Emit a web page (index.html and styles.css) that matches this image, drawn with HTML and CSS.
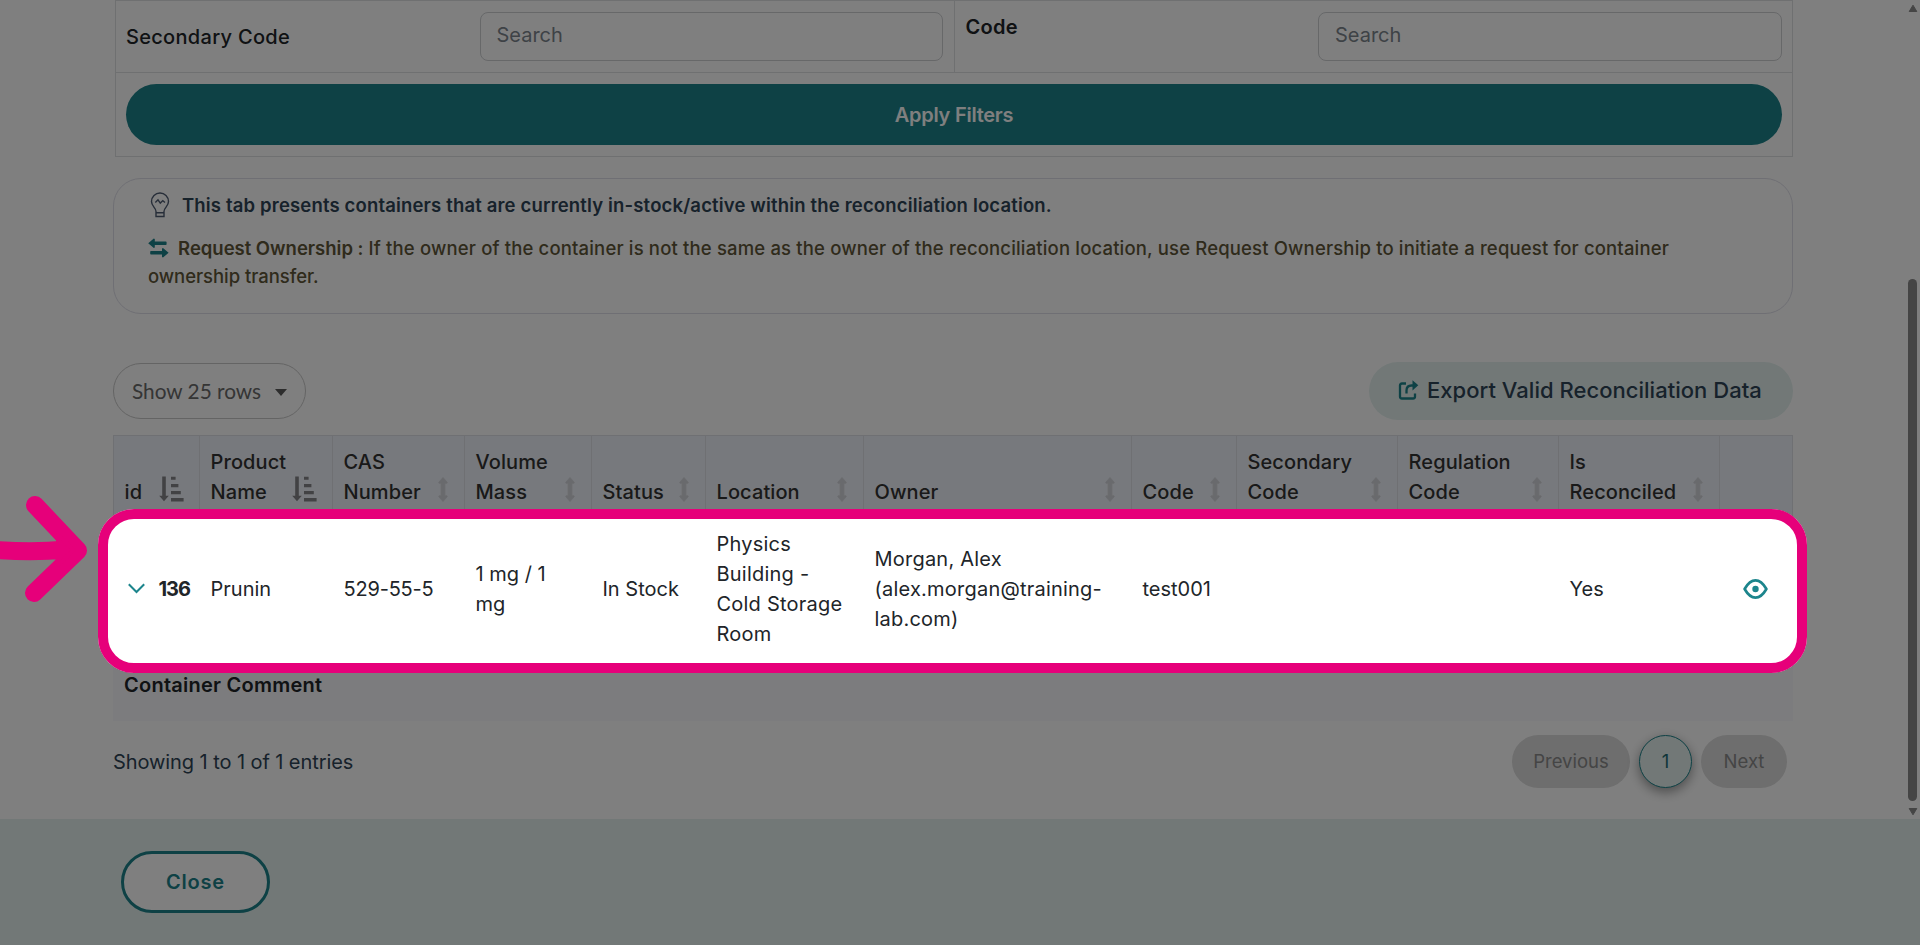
FILE: index.html
```
<!DOCTYPE html>
<html lang="en">
<head>
	<meta charset="utf-8" />
	<title>Reconciliation</title>
	<link rel="stylesheet" href="styles.css">
</head>
<body>
    <!-- Icons shared by the table head -->
    <svg class="sprite" width="0" height="0">
        <symbol id="sort" viewBox="0 0 10 25">
            <path d="M5 0.500 9.300 5.400 9 6.200H6.900V18.800H9L9.300 19.600 5 24.500 .7 19.600 1 18.800H3.100V6.200H1L.7 5.400Z" stroke="currentColor" stroke-width=".8" stroke-linejoin="round" fill="currentColor"/>
        </symbol>
        <symbol id="sort-asc" viewBox="0 0 25 26">
            <path d="M3.2 .5h3.6v19.3h3L5 25.2 .2 19.8h3zM12 .7h4.6v3H12zM12 8h7.4v3.2H12zM12 15h9.8v3.2H12zM12 22h12.6v3.4H12z" fill="currentColor"/>
        </symbol>
    </svg>

    <div class="page">
        <div class="scroller">
            <div class="content">

                <div class="filters">
                    <div class="filter-row">
                        <div class="filter">
                            <label class="filter-name">Secondary Code</label>
                            <input class="filter-input" type="text" placeholder="Search">
                        </div>
                        <div class="filter">
                            <label class="filter-name top">Code</label>
                            <input class="filter-input" type="text" placeholder="Search">
                        </div>
                    </div>
                    <div class="filter-apply">
                        <button class="btn-apply">Apply Filters</button>
                    </div>
                </div>

                <div class="info">
                    <div class="info-title">
                        <svg class="bulb" width="20" height="26" viewBox="0 0 20 26" fill="none" stroke="currentColor" stroke-width="1.4">
                            <path d="M6 19.500C6 15.500 1.500 14.500 1.500 9.500a8.500 8.500 0 0 1 17 0C18.500 14.500 14 15.500 14 19.500V24.500H6Z"/>
                            <path d="M6 20.800H14M5.300 10.500l2.700-2.700 2.300 3.300 2.500-2.500 2.200 1.900"/>
                        </svg>
                        This tab presents containers that are currently in-stock/active within the reconciliation location.
                    </div>
                    <div class="info-text">
                        <svg class="swap" width="21" height="20" viewBox="0 0 21 20" fill="currentColor">
                            <path d="M.2 5.200 5.800.400 6.800 1V3.400H17.800q.8 0 .8.8V6.200q0 .8-.8.8H6.800V9.400L5.800 10ZM20.600 14.800 15 10 14 10.600V13H3q-.8 0-.8.8V15.800q0 .8.8.8H14V19L15 19.600Z"/>
                        </svg>
                        <b class="info-key">Request Ownership :</b>
                        If the owner of the container is not the same as the owner of the reconciliation location, use Request Ownership to initiate a request for container<br>
                        <span class="info-last">ownership transfer.</span>
                    </div>
                </div>

                <div class="toolbar">
                    <button class="btn-rows">Show 25 rows <span class="caret"></span></button>
                    <button class="btn-export">
                        <svg width="21" height="22" viewBox="0 0 21 22" fill="none" stroke="currentColor" stroke-width="2.3">
                            <path d="M8 4.500H4Q2 4.500 2 6.500V17.500Q2 19.500 4 19.500H15Q17 19.500 17 17.500V14.500"/>
                            <path d="M8.500 14.500V11.500Q8.500 6.500 13.500 6.500H15"/>
                            <path d="M14.500 1.200 20.300 6.300 14.500 11.400Z" fill="currentColor" stroke="none"/>
                        </svg>
                        Export Valid Reconciliation Data
                    </button>
                </div>

                <table class="grid">
                    <colgroup>
                        <col class="c-id"><col class="c-product"><col class="c-cas"><col class="c-volume">
                        <col class="c-status"><col class="c-location"><col class="c-owner"><col class="c-code">
                        <col class="c-wide"><col class="c-wide"><col class="c-wide"><col class="c-view">
                    </colgroup>
                    <thead>
                        <tr>
                            <th><div class="head sorted">id <svg><use href="#sort-asc"/></svg></div></th>
                            <th><div class="head sorted">Product<br>Name <svg><use href="#sort-asc"/></svg></div></th>
                            <th><div class="head">CAS<br>Number <svg><use href="#sort"/></svg></div></th>
                            <th><div class="head">Volume<br>Mass <svg><use href="#sort"/></svg></div></th>
                            <th><div class="head">Status <svg><use href="#sort"/></svg></div></th>
                            <th><div class="head">Location <svg><use href="#sort"/></svg></div></th>
                            <th><div class="head">Owner <svg><use href="#sort"/></svg></div></th>
                            <th><div class="head">Code <svg><use href="#sort"/></svg></div></th>
                            <th><div class="head">Secondary<br>Code <svg><use href="#sort"/></svg></div></th>
                            <th><div class="head">Regulation<br>Code <svg><use href="#sort"/></svg></div></th>
                            <th><div class="head">Is<br>Reconciled <svg><use href="#sort"/></svg></div></th>
                            <th></th>
                        </tr>
                    </thead>
                    <tbody>
                        <tr class="item">
                            <td>
                                <div class="toggle">
                                    <svg width="17" height="11" viewBox="0 0 17 11" fill="none" stroke="#1c858c" stroke-width="2"><path d="M.8 1.300 8.500 9 16.200 1.300"/></svg>
                                    <b class="item-id">136</b>
                                </div>
                            </td>
                            <td>Prunin</td>
                            <td class="cas">529-55-5</td>
                            <td>1 mg / 1<br>mg</td>
                            <td>In Stock</td>
                            <td class="loc">Physics<br>Building -<br>Cold Storage<br>Room</td>
                            <td class="owner">Morgan, Alex<br>(alex.morgan@training-<br>lab.com)</td>
                            <td>test001</td>
                            <td></td>
                            <td></td>
                            <td>Yes</td>
                            <td class="view">
                                <svg width="25" height="20" viewBox="0 0 25 20">
                                    <path d="M1.600 10Q6.500 1.400 12.500 1.400T23.400 10Q18.500 18.600 12.500 18.600T1.600 10Z" fill="none" stroke="#1c858c" stroke-width="2.700" stroke-linejoin="round"/>
                                    <circle cx="12.500" cy="10" r="3.200" fill="#1c858c"/>
                                </svg>
                            </td>
                        </tr>
                        <tr class="comment">
                            <td colspan="12">Container Comment</td>
                        </tr>
                    </tbody>
                </table>

                <div class="table-foot">
                    <div class="count">Showing 1 to 1 of 1 entries</div>
                    <div class="pager">
                        <span class="pg prev">Previous</span>
                        <span class="pg current">1</span>
                        <span class="pg next">Next</span>
                    </div>
                </div>
            </div>

            <div class="scrollbar">
                <svg width="10" height="9" viewBox="0 0 10 9"><path d="M5 1.200 8.800 7.500H1.200Z" fill="#8a8a8a" stroke="#8a8a8a" stroke-linejoin="round"/></svg>
                <div class="thumb"></div>
                <svg width="10" height="9" viewBox="0 0 10 9"><path d="M5 7.800 8.800 1.500H1.200Z" fill="#8a8a8a" stroke="#8a8a8a" stroke-linejoin="round"/></svg>
            </div>
        </div>

        <div class="footer">
            <button class="btn-close">Close</button>
        </div>

        <!-- Dims everything but the highlighted row -->
        <div class="spotlight"></div>
        <svg class="pointer" width="90" height="110" viewBox="0 0 90 110" fill="none" stroke="#e6007a" stroke-width="18" stroke-linecap="round" stroke-linejoin="round">
            <path d="M-10 54.500Q32 58 66 54.500M35 10 78 55.500 34 98"/>
            <path d="M58 40 74 55 58 70Z" fill="#e6007a" stroke-width="4"/>
        </svg>
    </div>
</body>
</html>
```
FILE: styles.css
```
* {
    box-sizing:border-box;
}
body {
    margin:0;
    font:20px/30px Inter, "Liberation Sans", sans-serif;
    color:#212529;
    background:#fff;
}
button, input {
    font:inherit;
    color:inherit;
    margin:0;
}
.sprite {
    position:absolute;
}
.page {
    position:relative;
    width:1920px;
    height:945px;
    overflow:hidden;
}
.scroller {
    display:flex;
    height:819px;
}
.content {
    width:1680px;
    margin-left:113px;
}

/*Filters*/

.filters {
    margin-left:2px;
    border:1px solid #dee0e2;
}
.filter-row {
    display:flex;
    height:72px;
    border-bottom:1px solid #dee0e2;
}
.filter {
    display:flex;
    flex:1;
    justify-content:space-between;
    align-items:center;
    padding:0 10px;
}
.filter:first-child {
    border-right:1px solid #dee0e2;
}
.filter-name {
    font-weight:500;
    letter-spacing:.3px;
}
.filter-name.top {
    align-self:flex-start;
    margin:11px 0 0 1px;
    font-weight:600;
}
.filter-input {
    width:464px;
    height:49px;
    padding:0 16px 4px;
    border:1px solid #ced0d3;
    border-radius:8px;
    background:#fff;
}
.filter:first-child .filter-input {
    width:463px;
    margin-right:1px;
}
.filter-input::placeholder {
    color:#7c858d;
    opacity:1;
}
.filter-apply {
    padding:11px 10px;
}
.btn-apply {
    display:block;
    width:100%;
    height:61px;
    border:0;
    border-radius:31px;
    background:#1c828a;
    color:#fff;
    font-weight:600;
    letter-spacing:-.25px;
}

/*Info box*/

.info {
    height:136px;
    margin-top:21px;
    padding:12px 34px;
    border:1px solid #dedee8;
    border-radius:28px;
    font-size:18.5px;
    line-height:28px;
}
.info-title {
    display:flex;
    align-items:center;
    color:#2f4456;
    font-weight:600;
    letter-spacing:.16px;
}
.bulb {
    margin:0 12px 0 2px;
    color:#4f5c72;
}
.info-text {
    margin-top:15px;
    color:#5f5638;
    font-weight:500;
    letter-spacing:.16px;
    white-space:nowrap;
}
.info-key {
    font-weight:600;
    letter-spacing:-.02px;
}
.info-last {
    letter-spacing:-.05px;
}
.swap {
    margin-right:4px;
    vertical-align:-3px;
    color:#1c828a;
}

/*Table*/

.toolbar {
    display:flex;
    justify-content:space-between;
    align-items:center;
    height:58px;
    margin-top:48px;
}
.btn-rows {
    display:flex;
    justify-content:space-between;
    align-items:center;
    width:193px;
    height:56px;
    padding:0 18px;
    border:1px solid #c8c8c8;
    border-radius:28px;
    background:#fff;
    color:#6a6a6a;
    font-family:Lato, sans-serif;
    font-size:20.8px;
}
.caret {
    border:6px solid transparent;
    border-top:7px solid #5a5a5a;
    border-bottom:0;
    margin-top:3px;
}
.btn-export {
    display:flex;
    align-items:center;
    gap:8px;
    height:58px;
    padding:0 0 2px 29px;
    width:424px;
    border:0;
    border-radius:29px;
    background:#e4f1ef;
    color:#2f4456;
    font-size:22px;
    font-weight:500;
    letter-spacing:.03px;
    white-space:nowrap;
}
.btn-export svg {
    color:#1c828a;
}
.grid {
    width:1680px;
    margin-top:15px;
    table-layout:fixed;
    border-spacing:0;
}
.c-id {width:86px}
.c-product {width:133px}
.c-cas {width:132px}
.c-volume {width:127px}
.c-status {width:114px}
.c-location {width:158px}
.c-owner {width:268px}
.c-code {width:105px}
.c-wide {width:161px}
.c-view {width:74px}

.grid th {
    height:81px;
    padding:0 16px 9px 10.5px;
    border-top:1px solid #dfe1e6;
    border-left:1px solid #dfe1e6;
    background:#eff2fa;
    color:#333;
    font-weight:500;
    letter-spacing:.1px;
    text-align:left;
    vertical-align:bottom;
}
.grid th:last-child {
    border-right:1px solid #dfe1e6;
}
.head {
    position:relative;
}
.head svg {
    position:absolute;
    right:0;
    bottom:5px;
    width:10px;
    height:25px;
    color:#d3d5da;
}
.head.sorted svg {
    right:-1px;
    width:25px;
    height:26px;
    color:#848488;
}
.item td {
    height:147px;
    padding:0 0 2px 11.5px;
    white-space:nowrap;
}
.toggle {
    display:flex;
    align-items:center;
    gap:14px;
    padding-left:3px;
}
.item-id {
    font-weight:700;
    letter-spacing:-1px;
}
.item .cas {
    letter-spacing:-.2px;
}
.loc, .owner {
    letter-spacing:.22px;
}
.item .view {
    padding:0 2px 2px 0;
    text-align:center;
}
.view svg {
    display:block;
    margin:0 auto;
}
.comment td {
    height:58px;
    padding:7px 11px 0;
    background:#f8f8fc;
    font-weight:600;
    letter-spacing:.25px;
    vertical-align:top;
}
.table-foot {
    display:flex;
    justify-content:space-between;
    align-items:center;
    margin-top:14px;
    padding-right:6px;
}
.count {
    color:#2f4456;
    letter-spacing:-.08px;
}
.pager {
    display:flex;
    gap:9px;
}
.pg {
    height:53px;
    border-radius:27px;
    background:#dcdcdc;
    color:#8a8a8a;
    font-size:18.5px;
    line-height:52px;
    text-align:center;
}
.pg.prev {
    width:118px;
}
.pg.next {
    width:86px;
}
.pg.current {
    width:53px;
    border:1px solid #1c828a;
    background:#e4f1ef;
    color:#1c6b72;
    line-height:50px;
    box-shadow:0 4px 12px rgba(0,0,0,.4);
}

.scrollbar {
    display:flex;
    flex-direction:column;
    width:10px;
    height:819px;
    margin-left:115px;
    padding:4px 0 3px;
}
.thumb {
    width:9px;
    height:522px;
    margin:266px 0 auto;
    border-radius:5px;
    background:#8a8a8a;
}

/*Footer*/

.footer {
    height:126px;
    padding:32px 121px;
    background:#e4f1ef;
}
.btn-close {
    width:149px;
    height:62px;
    padding:0;
    border:3px solid #1c828a;
    border-radius:31px;
    background:#fff;
    color:#1c828a;
    font-weight:600;
    letter-spacing:.8px;
}

/*Highlight*/

.spotlight {
    position:absolute;
    left:98px;
    top:509px;
    width:1709px;
    height:164px;
    border:10px solid #e6007a;
    border-radius:36px;
    box-shadow:0 0 0 2500px rgba(0,0,0,.5);
}
.pointer {
    position:absolute;
    left:0;
    top:495px;
}
```
